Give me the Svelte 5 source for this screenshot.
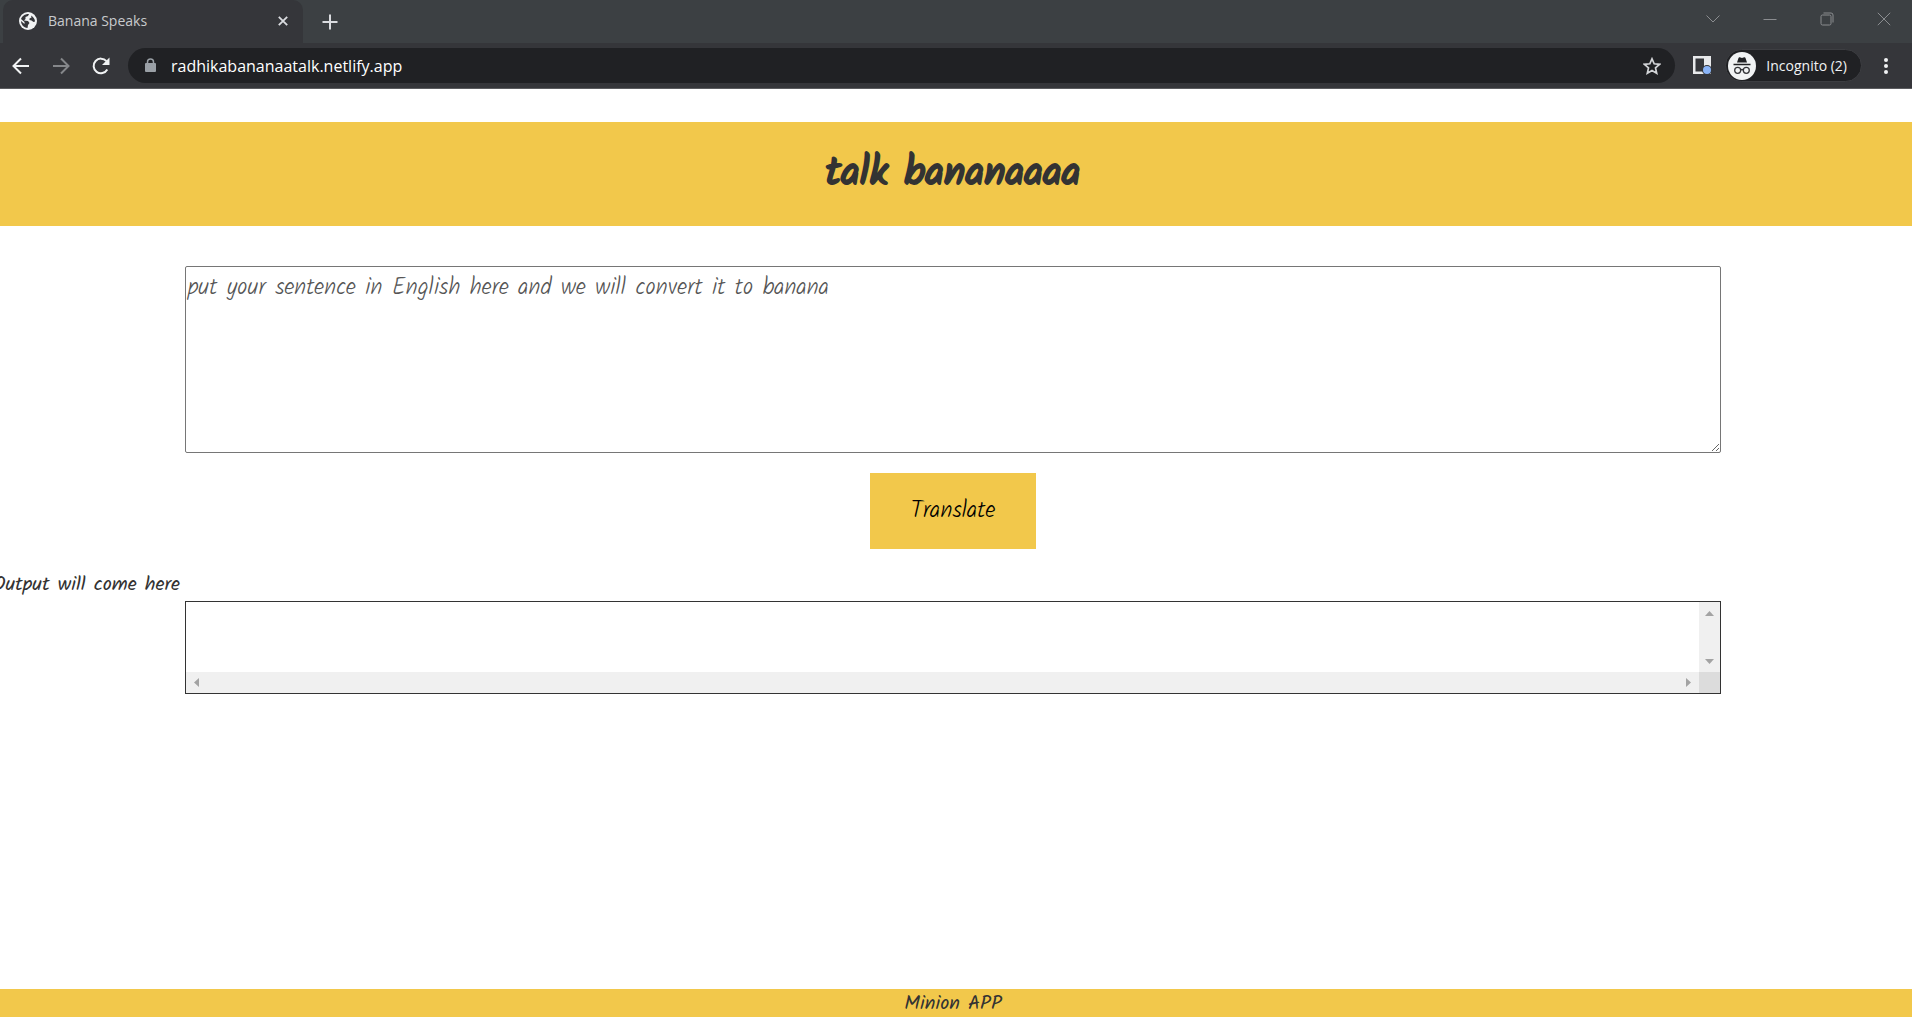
<script>
  let sentence = $state('');
</script>

<div class="window">
  <header class="browser">
    <div class="tabstrip">
      <div class="tab">
        <svg class="globe" viewBox="0 0 20 20" aria-hidden="true">
          <circle cx="10" cy="10" r="9" fill="#f1f3f4" />
          <path d="M11 3L10 5L7.500 6V8L6 9.500L10 10L11.500 12L10 14L9.500 17C5.500 16.500 3 13.500 3 10L6.500 13V11L3 8C4 5 7 2.800 11 3ZM13 4.500C15.500 6 17 8 17 10.500L15.500 11L13.500 9.500L11.500 9V7.500L13.500 6.500Z" fill="#35363a" />
        </svg>
        <span class="title">Banana Speaks</span>
        <button class="icon close" aria-label="Close tab">
          <svg width="10" height="10" viewBox="0 0 10 10"><path d="M.8.8l8.400 8.400M9.200.8L.8 9.200" stroke="#dadce0" stroke-width="1.800" /></svg>
        </button>
      </div>
      <button class="icon new" aria-label="New tab">
        <svg width="16" height="16" viewBox="0 0 16 16"><path d="M8 .5v15M.5 8h15" stroke="#dadce0" stroke-width="2" /></svg>
      </button>
      <div class="controls">
        <button class="icon" aria-label="Search tabs"><svg width="14" height="14" viewBox="0 0 14 14"><path d="M.5 3.500L7 10l6.500-6.500" /></svg></button>
        <button class="icon" aria-label="Minimize"><svg width="14" height="14" viewBox="0 0 14 14"><path d="M.5 7.500h13" /></svg></button>
        <button class="icon" aria-label="Restore"><svg width="14" height="14" viewBox="0 0 14 14"><rect x="1" y="3" width="10" height="10" rx="1.500" /><path d="M3.500 1H11a2 2 0 0 1 2 2v7.500" /></svg></button>
        <button class="icon" aria-label="Close"><svg width="14" height="14" viewBox="0 0 14 14"><path d="M.8.8l12.400 12.400M13.200.8L.8 13.200" /></svg></button>
      </div>
    </div>
    <div class="toolbar">
      <nav>
        <button class="icon" aria-label="Back"><svg width="18" height="18" viewBox="0 0 18 18"><path d="M17 9H2M9 1.500L1.500 9L9 16.500" fill="none" stroke="#f1f3f4" stroke-width="2" /></svg></button>
        <button class="icon" aria-label="Forward"><svg width="18" height="18" viewBox="0 0 18 18"><path d="M1 9h15M9 1.500L16.500 9L9 16.500" fill="none" stroke="#85878a" stroke-width="2" /></svg></button>
        <button class="icon" aria-label="Reload"><svg width="18" height="18" viewBox="0 0 18 18"><path d="M15.300 12.500A7.300 7.300 0 1 1 14.500 4.200" fill="none" stroke="#f1f3f4" stroke-width="2" /><path d="M17.500.5v7.500H10Z" fill="#f1f3f4" /></svg></button>
      </nav>
      <div class="omnibox">
        <svg width="11" height="15" viewBox="0 0 11 15" aria-hidden="true"><path d="M2.500 6V4a3 3 0 0 1 6 0v2" fill="none" stroke="#9aa0a6" stroke-width="1.500" /><rect y="5" width="11" height="9" rx="1" fill="#9aa0a6" /></svg>
        <input aria-label="Address" value="radhikabananaatalk.netlify.app" />
        <button class="icon" aria-label="Bookmark this tab"><svg width="18" height="18" viewBox="0 0 18 18"><path d="M9 1.800l2.200 5 5.400.5-4.100 3.600 1.200 5.300L9 13.400l-4.700 2.800 1.200-5.300L1.400 7.300l5.400-.5Z" fill="none" stroke="#d2d4d7" stroke-width="1.700" /></svg></button>
      </div>
      <button class="icon panel" aria-label="Side panel"><svg width="19" height="19" viewBox="0 0 19 19"><path fill-rule="evenodd" d="M0 0h18v18H0ZM2.500 2.500v13H11V2.500Z" fill="#e8e9eb" /><circle cx="14" cy="14" r="5" fill="#35363a" /><circle cx="14" cy="14" r="4" fill="#8ab4f8" /></svg></button>
      <button class="profile">
        <svg width="28" height="28" viewBox="0 0 28 28" aria-hidden="true">
          <circle cx="14" cy="14" r="14" fill="#f1f3f4" />
          <path d="M10.500 6q.4-1 1.300-.7l2.200.7 2.200-.7q.9-.3 1.300.7L19 10.500H9Z" fill="#202124" />
          <path d="M5.500 12.500h17" stroke="#202124" stroke-width="1.500" />
          <g fill="none" stroke="#35363a" stroke-width="1.300"><circle cx="9.700" cy="18.300" r="3" /><circle cx="18.300" cy="18.300" r="3" /><path d="M12.700 18q1.300-1 2.600 0" /></g>
        </svg>
        Incognito (2)
      </button>
      <button class="icon menu" aria-label="Menu"><svg width="4" height="18" viewBox="0 0 4 18"><g fill="#f1f3f4"><circle cx="2" cy="3" r="2" /><circle cx="2" cy="9" r="2" /><circle cx="2" cy="15" r="2" /></g></svg></button>
    </div>
  </header>

  <main>
    <h1>talk bananaaaa</h1>
    <div class="content">
      <textarea aria-label="Sentence in English" placeholder="put your sentence in English here and we will convert it to banana" bind:value={sentence}></textarea>
      <button class="translate">Translate</button>
    </div>
    <p class="caption"><span>Output will come here</span></p>
    <div class="content">
      <div class="output" role="region" aria-label="Output">
        <div class="text"></div>
        <div class="bar vertical">
          <svg width="9" height="5" viewBox="0 0 9 5"><path d="M0 5L4.500 0L9 5Z" /></svg>
          <svg width="9" height="5" viewBox="0 0 9 5"><path d="M0 0h9L4.500 5Z" /></svg>
        </div>
        <div class="bar">
          <svg width="5" height="9" viewBox="0 0 5 9"><path d="M5 0v9L0 4.500Z" /></svg>
          <svg width="5" height="9" viewBox="0 0 5 9"><path d="M0 0v9L5 4.500Z" /></svg>
        </div>
        <div class="corner"></div>
      </div>
    </div>
  </main>
  <footer>Minion APP</footer>
</div>

<style>
  :global(body) { background: #fff; }
  * { box-sizing: border-box; }
  button { border: 0; padding: 0; cursor: pointer; }
  svg { display: block; flex: none; }
  .icon { display: grid; place-items: center; background: none; }
  .window { min-height: 100vh; display: flex; flex-direction: column; color: #333; font-family: Kalam, Lato, sans-serif; }

  .browser { font-family: "Segoe UI", "Open Sans", sans-serif; background: #35363a; border-bottom: 1px solid #5b5c5f; }
  .tabstrip { height: 43px; display: flex; background: #3c4043; padding-left: 3px; }
  .tab { width: 300px; display: flex; align-items: center; padding: 0 14px 2px 15px; background: #35363a; border-radius: 10px 10px 0 0; color: #c8cacd; font-size: 14px; }
  .globe { width: 20px; height: 20px; margin-right: 10px; }
  .title { flex: 1; white-space: nowrap; }
  .close { width: 12px; height: 20px; }
  .new { width: 54px; }
  .controls { margin-left: auto; display: flex; gap: 43px; align-items: center; padding: 0 21px 6px 0; }
  .controls svg { fill: none; stroke: #8b8d90; stroke-width: 1; }
  .toolbar { height: 45px; display: flex; align-items: center; padding: 0 24px 0 12px; }
  nav { display: flex; gap: 22px; width: 116px; }
  .omnibox { flex: 1; height: 35px; display: flex; align-items: center; gap: 15px; padding: 0 14px 0 17px; border-radius: 18px; background: #202124; }
  .omnibox input { flex: 1; min-width: 0; border: 0; padding: 0; background: none; color: #fff; font: inherit; font-size: 16px; }
  .panel { margin-left: 18px; }
  .profile { height: 33px; display: flex; align-items: center; gap: 10px; margin-left: 13px; padding: 0 14px 0 2px; border: 1px solid #3d3e42; border-radius: 17px; background: #202124; color: #f1f3f4; font: inherit; font-size: 14px; white-space: nowrap; }
  .menu { margin-left: 22px; }

  main { flex: 1; padding-top: 33px; }
  h1 { margin: 0; height: 104px; padding: 0 6px 0 0; display: flex; align-items: center; justify-content: center; background: #f2c84b; font-size: 40px; line-height: 60px; font-weight: 400; -webkit-text-stroke: 2px #333; }
  .content { display: flex; flex-direction: column; align-items: center; padding-right: 6px; }
  textarea { width: calc(80% + 11px); height: 187px; margin-top: 40px; padding: 2px; border: 1px solid #767676; border-radius: 2px; color: #333; background: #fff; font: inherit; font-weight: 300; font-size: 23px; line-height: 38px; resize: both; }
  textarea::placeholder { color: #555; }
  .translate { margin-top: 20px; width: 166px; height: 76px; background: #f2c84b; color: #000; font: inherit; font-weight: 300; font-size: 23px; }
  .caption { width: 180px; margin: 20px 0 0; display: flex; justify-content: flex-end; white-space: nowrap; font-size: 20px; line-height: 32px; }
  .output { width: calc(80% + 11px); height: 93px; display: grid; grid-template: 1fr 21px / 1fr 21px; border: 1px solid #333; }
  .bar { display: flex; align-items: center; justify-content: space-between; padding: 0 8px; background: #f0f0f0; fill: #a3a3a3; }
  .vertical { flex-direction: column; padding: 9px 0 8px; }
  .corner { background: #dcdcdc; }
  footer { padding: 2px 6px 0 0; background: #f2c84b; text-align: center; font-size: 20px; line-height: 26px; }
</style>
